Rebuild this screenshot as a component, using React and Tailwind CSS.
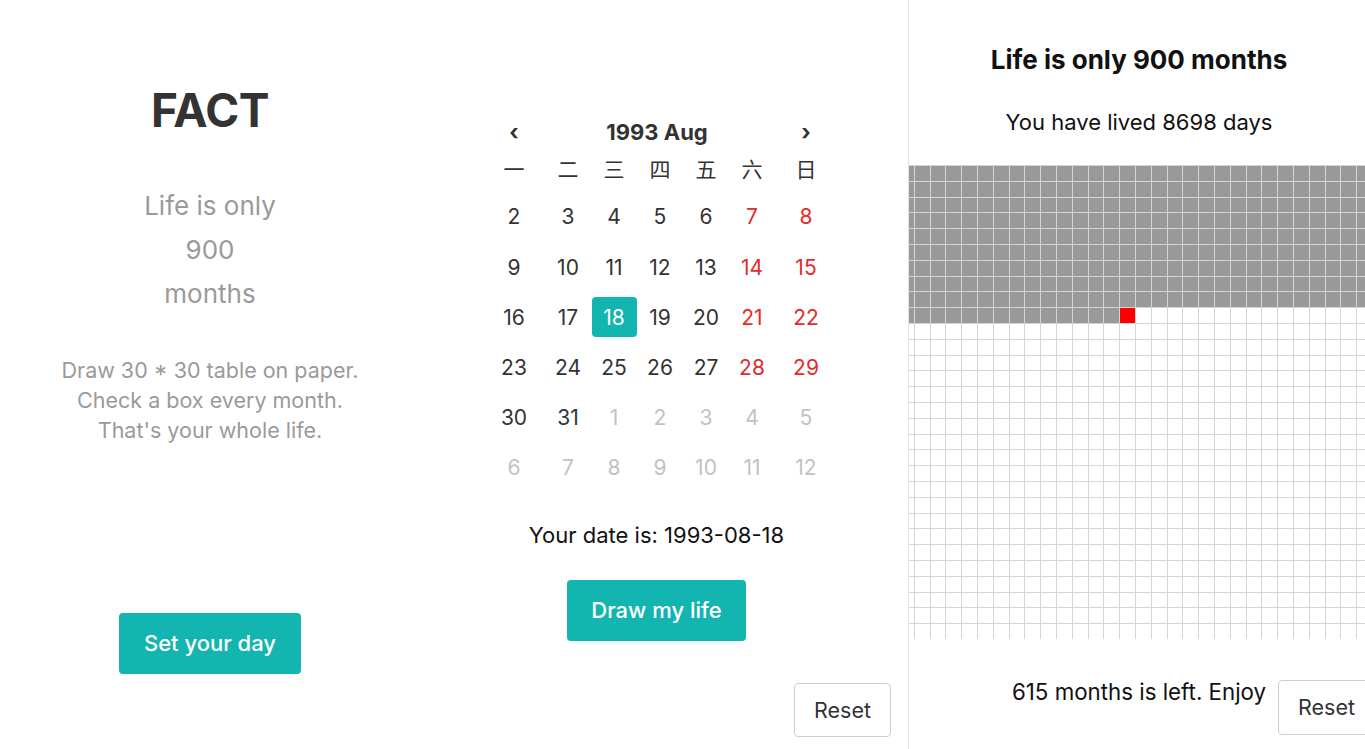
const weeks = [
  [2, 3, 4, 5, 6, 7, 8],
  [9, 10, 11, 12, 13, 14, 15],
  [16, 17, 18, 19, 20, 21, 22],
  [23, 24, 25, 26, 27, 28, 29],
  [30, 31, 1, 2, 3, 4, 5],
  [6, 7, 8, 9, 10, 11, 12],
]
const weekdays = ['一', '二', '三', '四', '五', '六', '日']
const lived = 284
const cells = Array.from({ length: 900 }, (_, i) => i)

function FactPanel() {
  return (
    <div className="w-[420px] shrink-0 flex flex-col items-center pt-[87px] text-center">
      <h1 className="text-[46px] leading-none font-bold tracking-[-0.5px] text-[#333]">FACT</h1>
      <div className="mt-[51px] text-[26px] leading-[44px] text-[#9a9a9a]">
        <p>Life is only</p>
        <p>900</p>
        <p>months</p>
      </div>
      <div className="mt-[39px] text-[21.5px] leading-[30px] text-[#9a9a9a]">
        <p>Draw 30 * 30 table on paper.</p>
        <p>Check a box every month.</p>
        <p>That's your whole life.</p>
      </div>
      <button className="mt-[168px] w-[182px] h-[61px] rounded bg-[#13b5b1] text-white text-[22px] font-medium">
        Set your day
      </button>
    </div>
  )
}

function dayColor(row, col) {
  const other = (row === 4 && col >= 2) || row === 5
  if (other) return 'text-[#c2c2c2]'
  if (col >= 5) return 'text-[#e52b2b]'
  return 'text-[#333]'
}

function CalendarPanel() {
  const cols = 'grid grid-cols-[62px_46px_46px_46px_46px_46px_62px]'
  return (
    <div className="w-[489px] shrink-0 pr-[15px] flex flex-col items-center pt-[117px] border-r border-[#e3e3e3]">
      <div className="w-[354px] ml-[7px]">
        <div className="flex items-center h-[30px] text-[#333]">
          <span className="w-[62px] text-center text-[22px] font-bold">‹</span>
          <span className="flex-1 text-center text-[22px] font-bold -ml-[6px]">1993 Aug</span>
          <span className="w-[62px] text-center text-[22px] font-bold">›</span>
        </div>
        <div className={cols + ' mt-[5px] h-[36px] items-center text-[21px] text-[#333]'}>
          {weekdays.map(w => (
            <span key={w} className="text-center">{w}</span>
          ))}
        </div>
        <div className="pt-[4px]">
          {weeks.map((week, r) => (
            <div key={r} className={cols + ' h-[50.2px] items-center text-[21px]'}>
              {week.map((d, c) => (
                <div key={c} className="flex justify-center">
                  {r === 2 && c === 2 ? (
                    <span className="w-[45px] h-[40px] rounded bg-[#13b5b1] text-white flex items-center justify-center">{d}</span>
                  ) : (
                    <span className={dayColor(r, c)}>{d}</span>
                  )}
                </div>
              ))}
            </div>
          ))}
        </div>
      </div>
      <p className="mt-[28px] text-[22px] leading-[28px] text-[#111]">Your date is: 1993-08-18</p>
      <button className="mt-[31px] w-[179px] h-[61px] rounded bg-[#13b5b1] text-white text-[22px] font-medium">
        Draw my life
      </button>
      <div className="w-full flex justify-end mt-[42px]">
        <button className="w-[97px] h-[54px] mr-[2px] rounded border border-[#cfcfcf] text-[21.5px] text-[#333]">Reset</button>
      </div>
    </div>
  )
}

function LifePanel() {
  return (
    <div className="flex-1 min-w-0 overflow-hidden">
      <div className="w-[460px] pt-[44px] text-center">
        <h2 className="text-[26px] leading-[32px] font-bold text-[#111]">Life is only 900 months</h2>
        <p className="mt-[32px] text-[22px] leading-[28px] text-[#111]">You have lived 8698 days</p>
        <div className="mt-[29px] ml-[-11px] grid grid-cols-[repeat(30,15.8px)] auto-rows-[15.8px] w-[474px]">
          {cells.map(i => (
            <div
              key={i}
              className={
                'border-l border-t border-[#d6d6d6] ' +
                (i < lived ? 'bg-[#999]' : i === lived ? 'bg-[#ff0000]' : 'bg-white')
              }
            />
          ))}
        </div>
        <div className="mt-[41px] grid grid-cols-[minmax(0,1fr)_auto_minmax(0,1fr)] items-start">
          <span />
          <span className="text-[22.3px] leading-[24px] text-[#111]">615 months is left. Enjoy</span>
          <div className="flex">
            <button className="ml-[12px] w-[97px] h-[55px] shrink-0 rounded border border-[#cfcfcf] text-[21.5px] text-[#333]">Reset</button>
          </div>
        </div>
      </div>
    </div>
  )
}

export default function App() {
  return (
    <div className="flex h-screen w-full overflow-hidden bg-white font-['Inter','Noto_Sans_CJK_SC',sans-serif]">
      <FactPanel />
      <CalendarPanel />
      <LifePanel />
    </div>
  )
}
